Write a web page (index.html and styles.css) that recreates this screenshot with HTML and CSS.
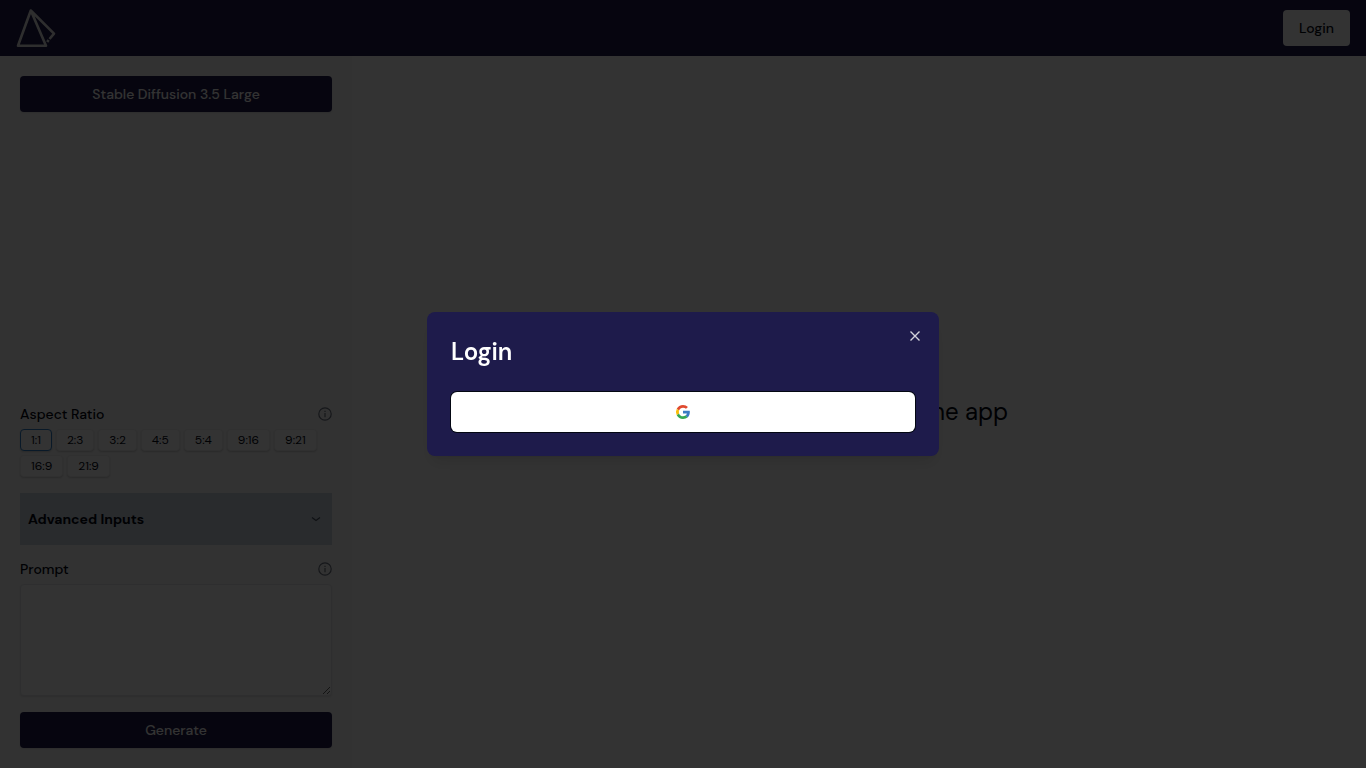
FILE: index.html
```html
<!DOCTYPE html>
<html lang="en">
<head>
    <meta charset="UTF-8">
    <meta name="viewport" content="width=device-width, initial-scale=1.0">
    <title>Login</title>
    <link rel="stylesheet" href="styles.css">
</head>
<body>

    <header class="navbar">
        <a href="#" class="logo" aria-label="Home">
            <svg width="40" height="40" viewBox="0 0 40 40" fill="none" stroke="currentColor" stroke-width="2.6">
                <path d="M14.8 2.500L2 37.700H30L14.800 2.500L38 25.600L33.500 31" stroke-linejoin="round" />
                <path d="M32.600 32L31.200 34" />
            </svg>
        </a>
        <button type="button" class="login-btn">Login</button>
    </header>

    <div class="layout">
        <aside class="sidebar">
            <button type="button" class="primary-btn">Stable Diffusion 3.5 Large</button>

            <form class="inputs">
                <div class="field-head">
                    <span id="ratioLabel">Aspect Ratio</span>
                    <svg class="info" viewBox="0 0 14 14" fill="none" stroke="currentColor" stroke-width="1.2"><circle cx="7" cy="7" r="6.2" /><path d="M7 6v4.300M7 3.700v1.200" /></svg>
                </div>
                <div class="ratio-list" role="radiogroup" aria-labelledby="ratioLabel">
                    <label class="ratio"><input type="radio" name="ratio" checked>1:1</label>
                    <label class="ratio"><input type="radio" name="ratio">2:3</label>
                    <label class="ratio"><input type="radio" name="ratio">3:2</label>
                    <label class="ratio"><input type="radio" name="ratio">4:5</label>
                    <label class="ratio"><input type="radio" name="ratio">5:4</label>
                    <label class="ratio"><input type="radio" name="ratio">9:16</label>
                    <label class="ratio"><input type="radio" name="ratio">9:21</label>
                    <label class="ratio"><input type="radio" name="ratio">16:9</label>
                    <label class="ratio"><input type="radio" name="ratio">21:9</label>
                </div>

                <button type="button" class="advanced">
                    Advanced Inputs
                    <svg width="16" height="16" viewBox="0 0 16 16" fill="none" stroke="currentColor" stroke-width="1.2"><path d="M4 6.500L8 9.500L12 6.500" /></svg>
                </button>

                <div class="field-head">
                    <label for="prompt">Prompt</label>
                    <svg class="info" viewBox="0 0 14 14" fill="none" stroke="currentColor" stroke-width="1.2"><circle cx="7" cy="7" r="6.2" /><path d="M7 6v4.300M7 3.700v1.200" /></svg>
                </div>
                <textarea id="prompt" class="prompt"></textarea>

                <button type="button" class="primary-btn">Generate</button>
            </form>
        </aside>

        <main class="content">
            <p>Please login to use the app</p>
        </main>
    </div>

    <div class="overlay">
        <div class="modal" role="dialog" aria-modal="true" aria-labelledby="modalTitle">
            <h2 id="modalTitle">Login</h2>
            <button type="button" class="google-btn" aria-label="Login with Google">
                <svg width="16" height="16" viewBox="0 0 48 48">
                    <path fill="#e04a2f" d="M24 11c3.500 0 6.600 1.200 9 3.600l5.800-5.800C35 5.300 30 3 24 3 15.800 3 8.700 7.700 5.300 14.500l6.900 5.300C13.800 14.700 18.500 11 24 11z" />
                    <path fill="#3b7cc4" d="M44.500 24.500c0-1.600-.1-2.800-.4-4.100H24v8h11.700c-.5 3-2.200 5.400-4.700 7l6.700 5.200c4.200-3.900 6.800-9.600 6.800-16.100z" />
                    <path fill="#fbbc05" d="M12.200 28.200a13 13 0 0 1 0-8.400l-6.900-5.300a21 21 0 0 0 0 19z" />
                    <path fill="#34a853" d="M24 45c5.700 0 10.400-1.900 13.700-5l-6.700-5.200c-1.800 1.300-4.200 2-7 2-5.500 0-10.200-3.600-11.800-8.600l-6.900 5.300C8.700 40.300 15.800 45 24 45z" />
                </svg>
            </button>
            <button type="button" class="close-btn" aria-label="Close">
                <svg width="16" height="16" viewBox="0 0 16 16" fill="none" stroke="currentColor" stroke-width="1.4"><path d="M3.500 3.500L12.500 12.500M12.500 3.500L3.500 12.500" /></svg>
            </button>
        </div>
    </div>

</body>
</html>
```

FILE: styles.css
```css
* { box-sizing: border-box; }
body { margin: 0; height: 100vh; display: flex; flex-direction: column; font-family: "DM Sans", Inter, sans-serif; font-size: 14px; line-height: 20px; color: #030712; background: #fff; }
button, textarea { font: inherit; color: inherit; }
button { border: 0; padding: 0; cursor: pointer; }

.navbar { display: flex; align-items: center; justify-content: space-between; height: 56px; padding: 0 16px; background: #1e1b4b; }
.logo { display: flex; color: #e5e5e5; }
.login-btn { height: 36px; padding: 0 16px; border-radius: 4px; background: #fff; font-weight: 500; }

.layout { flex: 1; display: flex; min-height: 0; }
.sidebar { width: 352px; padding: 20px; display: flex; flex-direction: column; justify-content: space-between; background: #fafafa; }
.content { flex: 1; display: flex; align-items: center; justify-content: center; font-size: 24px; line-height: 32px; }
.content p { margin: 0; }

.primary-btn { width: 100%; height: 36px; border-radius: 4px; background: #1e1b4b; color: #fff; font-weight: 500; box-shadow: 0 1px 2px #ddd; }
.inputs { display: flex; flex-direction: column; }
.field-head { display: flex; align-items: center; justify-content: space-between; margin-bottom: 5px; font-weight: 500; }
.info { width: 14px; height: 14px; color: #6b7280; }
.ratio-list { display: flex; flex-wrap: wrap; gap: 4px; }
.ratio { position: relative; height: 22px; padding: 0 10px; border: 1px solid #f0f0f0; border-radius: 4px; background: #fff; box-shadow: 0 1px 2px #ccc; font-size: 12px; line-height: 20px; cursor: pointer; }
.ratio input { position: absolute; inset: 0; margin: 0; opacity: 0; cursor: pointer; }
.ratio:has(input:checked) { border-color: #2f7fc8; }
.advanced { display: flex; align-items: center; justify-content: space-between; height: 52px; margin: 16px 0 14px; padding: 0 8px; background: #cbd5e1; font-weight: 700; }
.advanced svg { color: #4b5563; }
.prompt { display: block; width: 100%; height: 112px; margin-bottom: 16px; padding: 8px; border: 1px solid #e5e7eb; border-radius: 4px; background: #fff; box-shadow: 0 1px 2px #ddd; resize: vertical; }

.overlay { position: fixed; inset: 0; display: flex; align-items: center; justify-content: center; background: rgba(0, 0, 0, 0.8); }
.modal { position: relative; width: 100%; max-width: 512px; padding: 24px; border-radius: 8px; background: #1e1b4b; color: #fff; box-shadow: 0 10px 15px -3px rgba(0, 0, 0, 0.1), 0 4px 6px -4px rgba(0, 0, 0, 0.1); }
.modal h2 { margin: 0 0 24px; font-size: 24px; line-height: 32px; font-weight: 600; }
.google-btn { display: flex; align-items: center; justify-content: center; width: 100%; height: 40px; border-radius: 6px; background: #fff; box-shadow: 0 0 0 1px #030712; }
.close-btn { position: absolute; top: 16px; right: 16px; display: flex; background: none; opacity: 0.8; }
```
